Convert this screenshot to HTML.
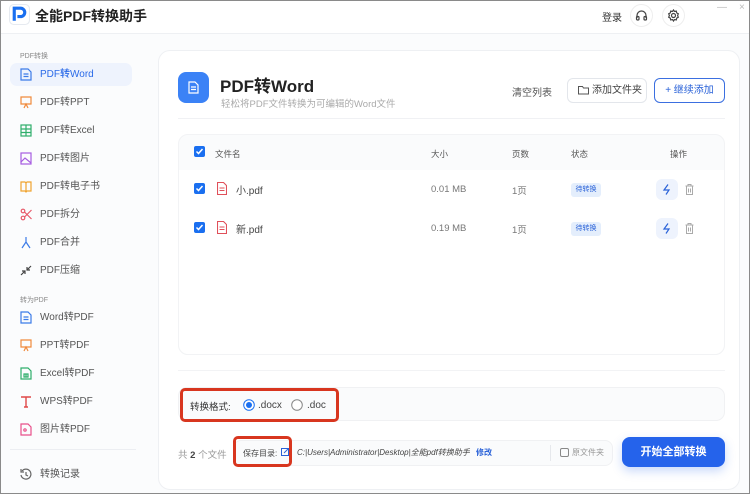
<!DOCTYPE html>
<html><head><meta charset="utf-8"><style>
*{box-sizing:border-box;margin:0;padding:0}
body{width:750px;height:494px;overflow:hidden;font-family:"Liberation Sans","Noto Sans CJK SC",sans-serif;background:#fbfcfd;position:relative;color:#333}
.frame{position:absolute;inset:0;border:1px solid #8a8a8a;pointer-events:none;z-index:9}
.hdr{position:absolute;left:0;top:0;width:750px;height:34px;background:#fff;border-bottom:1px solid #eef0f3}
.abs{position:absolute}
.side .it{position:absolute;left:10px;width:122px;height:23px;border-radius:7px;font-size:10px;color:#555;line-height:23px;padding-left:30px}
.side .it svg{position:absolute;left:10px;top:5px}
.panel{position:absolute;left:158px;top:50px;width:582px;height:440px;background:#fff;border:1px solid #eef0f3;border-radius:12px}
</style></head><body>
<div class="hdr">
 <svg class="abs" style="left:9px;top:4px" width="21" height="21" viewBox="0 0 20 20"><rect x="0.5" y="0.5" width="19" height="19" rx="4" fill="#fff" stroke="#e6eaf0"/><path d="M5 16V4h6a4 4 0 0 1 0 8H8" fill="none" stroke="#1a6ff0" stroke-width="3"/></svg>
 <div class="abs" style="left:35px;top:6px;font-size:14px;font-weight:bold;color:#222">全能PDF转换助手</div>
 <div class="abs" style="left:602px;top:9px;font-size:10px;color:#333">登录</div>
 <div class="abs" style="left:630px;top:4px;width:23px;height:23px;border:1px solid #eee;border-radius:50%"></div>
 <svg class="abs" style="left:635px;top:9px" width="13" height="13" viewBox="0 0 13 13" fill="none" stroke="#444" stroke-width="1.2"><path d="M2 9V6.5a4.5 4.5 0 0 1 9 0V9"/><rect x="1.5" y="7.5" width="2.5" height="3.5" rx="1"/><rect x="9" y="7.5" width="2.5" height="3.5" rx="1"/></svg>
 <div class="abs" style="left:662px;top:4px;width:23px;height:23px;border:1px solid #eee;border-radius:50%"></div>
 <svg class="abs" style="left:667px;top:9px" width="13" height="13" viewBox="0 0 13 13" fill="none" stroke="#444" stroke-width="1.2"><circle cx="6.5" cy="6.5" r="2"/><path d="M6.5 1l1 1.5 1.8-.4.4 1.8 1.6.9-.7 1.7.7 1.7-1.6.9-.4 1.8-1.8-.4-1 1.5-1-1.5-1.8.4-.4-1.8-1.6-.9.7-1.7-.7-1.7 1.6-.9.4-1.8 1.8.4z"/></svg>
 <div class="abs" style="left:717px;top:2px;font-size:10px;color:#bbb">—</div>
 <div class="abs" style="left:739px;top:2px;font-size:10px;color:#bbb">×</div>
</div>
<div class="side">
 <div class="abs" style="left:20px;top:51px;font-size:7px;color:#888">PDF转换</div>
 <div class="it" style="top:63px;background:#eef3fd;color:#2a6ae8;font-weight:500"><svg width="12" height="13" viewBox="0 0 12 13" fill="none" stroke="#3b7be8" stroke-width="1.2"><path d="M1 1h7l3 3v8H1z"/><path d="M3.5 6h5M3.5 8.5h5"/></svg>PDF转Word</div>
 <div class="it" style="top:91px"><svg width="12" height="13" viewBox="0 0 12 13" fill="none" stroke="#f08a3c" stroke-width="1.2"><path d="M1 1h10v7H1zM4 12l2-4 2 4"/></svg>PDF转PPT</div>
 <div class="it" style="top:119px"><svg width="12" height="13" viewBox="0 0 12 13" fill="none" stroke="#2fae6b" stroke-width="1.2"><rect x="1" y="1" width="10" height="11"/><path d="M1 5h10M1 8.5h10M6 1v11"/></svg>PDF转Excel</div>
 <div class="it" style="top:147px"><svg width="12" height="13" viewBox="0 0 12 13" fill="none" stroke="#a65ce0" stroke-width="1.2"><rect x="1" y="1" width="10" height="11"/><path d="M1 10l4-4 6 5"/></svg>PDF转图片</div>
 <div class="it" style="top:175px"><svg width="12" height="13" viewBox="0 0 12 13" fill="none" stroke="#f0a430" stroke-width="1.2"><path d="M1 2h4l1 1 1-1h4v9H7l-1 1-1-1H1zM6 3v9"/></svg>PDF转电子书</div>
 <div class="it" style="top:203px"><svg width="12" height="13" viewBox="0 0 12 13" fill="none" stroke="#e85a6a" stroke-width="1.2"><circle cx="3" cy="10" r="1.8"/><circle cx="3" cy="3" r="1.8"/><path d="M4.5 4l7 7M4.5 9l7-7"/></svg>PDF拆分</div>
 <div class="it" style="top:231px"><svg width="12" height="13" viewBox="0 0 12 13" fill="none" stroke="#3b7be8" stroke-width="1.2"><path d="M6 1v5M6 6l-4 6M6 6l4 6"/></svg>PDF合并</div>
 <div class="it" style="top:259px"><svg width="12" height="13" viewBox="0 0 12 13" fill="none" stroke="#444" stroke-width="1.2"><path d="M1 11l4-4M2 7h3v3M11 2L7 6M7 3v3h3"/></svg>PDF压缩</div>
 <div class="abs" style="left:20px;top:295px;font-size:7px;color:#888">转为PDF</div>
 <div class="it" style="top:306px"><svg width="12" height="13" viewBox="0 0 12 13" fill="none" stroke="#3b7be8" stroke-width="1.2"><path d="M1 1h7l3 3v8H1z"/><path d="M3.5 6h5M3.5 8.5h5"/></svg>Word转PDF</div>
 <div class="it" style="top:334px"><svg width="12" height="13" viewBox="0 0 12 13" fill="none" stroke="#f08a3c" stroke-width="1.2"><path d="M1 1h10v7H1zM4 12l2-4 2 4"/></svg>PPT转PDF</div>
 <div class="it" style="top:362px"><svg width="12" height="13" viewBox="0 0 12 13" fill="none" stroke="#2fae6b" stroke-width="1.2"><path d="M1 1h7l3 3v8H1z"/><path d="M4 7h4v3H4zM6 7v3"/></svg>Excel转PDF</div>
 <div class="it" style="top:390px"><svg width="12" height="13" viewBox="0 0 12 13" fill="none" stroke="#e04848" stroke-width="1.4"><path d="M1 2h10M6 2v10M4 12h4"/></svg>WPS转PDF</div>
 <div class="it" style="top:418px"><svg width="12" height="13" viewBox="0 0 12 13" fill="none" stroke="#e8508a" stroke-width="1.2"><path d="M1 1h7l3 3v8H1z"/><circle cx="5" cy="7" r="1.2"/></svg>图片转PDF</div>
 <div class="abs" style="left:10px;top:449px;width:126px;height:1px;background:#eceef2"></div>
 <div class="it" style="top:463px"><svg width="12" height="13" viewBox="0 0 12 13" fill="none" stroke="#666" stroke-width="1.2"><path d="M2 3a5 5 0 1 1-1 4"/><path d="M1 1v3h3M6 4v3l2 1"/></svg>转换记录</div>
</div>
<div class="panel"></div>
<div class="abs" style="left:178px;top:72px;width:31px;height:31px;border-radius:8px;background:#3b82f6"></div>
<svg class="abs" style="left:188px;top:81px" width="11" height="13" viewBox="0 0 11 13" fill="none" stroke="#fff" stroke-width="1.2"><path d="M1 1h6l3 3v8H1z"/><path d="M3 6h5M3 8.5h5"/></svg>
<div class="abs" style="left:220px;top:72px;font-size:17px;font-weight:bold;color:#222">PDF转Word</div>
<div class="abs" style="left:221px;top:96px;font-size:9.5px;color:#aaa">轻松将PDF文件转换为可编辑的Word文件</div>
<div class="abs" style="left:512px;top:84px;font-size:10px;color:#555">清空列表</div>
<div class="abs" style="left:567px;top:78px;width:80px;height:25px;border:1px solid #e3e6eb;border-radius:6px;font-size:10px;line-height:23px;padding-left:24px;color:#444">添加文件夹</div>
<svg class="abs" style="left:578px;top:85px" width="11" height="10" viewBox="0 0 11 10" fill="none" stroke="#555" stroke-width="1"><path d="M.5 1.5h4l1 1.5h5v6H.5z"/></svg>
<div class="abs" style="left:654px;top:78px;width:71px;height:25px;border:1px solid #3b6fe0;border-radius:6px;font-size:10px;line-height:23px;text-align:center;color:#2a62d8">+ 继续添加</div>
<div class="abs" style="left:178px;top:118px;width:547px;height:1px;background:#f0f1f4"></div>
<div class="abs" style="left:178px;top:134px;width:547px;height:221px;background:#fafbfc;border-radius:10px;border:1px solid #f2f3f5"></div>
<div class="abs" style="left:178px;top:170px;width:547px;height:185px;background:#fff;border-radius:0 0 10px 10px;border:1px solid #f2f3f5;border-top:none"></div>
<div style="font-size:8.5px;color:#555">
 <div class="abs" style="left:215px;top:148px">文件名</div>
 <div class="abs" style="left:431px;top:148px">大小</div>
 <div class="abs" style="left:512px;top:148px">页数</div>
 <div class="abs" style="left:571px;top:148px">状态</div>
 <div class="abs" style="left:670px;top:148px">操作</div>
</div>
<svg class="abs" style="left:194px;top:146px" width="11" height="11"><rect width="11" height="11" rx="2" fill="#1a6ff0"/><path d="M2.5 5.5l2 2 4-4.5" stroke="#fff" stroke-width="1.5" fill="none"/></svg>
<svg class="abs" style="left:194px;top:183px" width="11" height="11"><rect width="11" height="11" rx="2" fill="#1a6ff0"/><path d="M2.5 5.5l2 2 4-4.5" stroke="#fff" stroke-width="1.5" fill="none"/></svg>
<svg class="abs" style="left:194px;top:222px" width="11" height="11"><rect width="11" height="11" rx="2" fill="#1a6ff0"/><path d="M2.5 5.5l2 2 4-4.5" stroke="#fff" stroke-width="1.5" fill="none"/></svg>
<svg class="abs" style="left:217px;top:182px" width="10" height="13" viewBox="0 0 10 13" fill="none" stroke="#e0505a" stroke-width="1.1"><path d="M.5.5h6l3 3v9h-9z"/><path d="M2.5 6h5M2.5 8.5h5"/></svg>
<svg class="abs" style="left:217px;top:221px" width="10" height="13" viewBox="0 0 10 13" fill="none" stroke="#e0505a" stroke-width="1.1"><path d="M.5.5h6l3 3v9h-9z"/><path d="M2.5 6h5M2.5 8.5h5"/></svg>
<div style="font-size:10px;color:#444">
 <div class="abs" style="left:236px;top:182px">小.pdf</div>
 <div class="abs" style="left:236px;top:221px">新.pdf</div>
</div>
<div style="font-size:9.5px;color:#777">
 <div class="abs" style="left:431px;top:184px">0.01 MB</div>
 <div class="abs" style="left:431px;top:223px">0.19 MB</div>
 <div class="abs" style="left:512px;top:183px">1页</div>
 <div class="abs" style="left:512px;top:222px">1页</div>
</div>
<div class="abs" style="left:571px;top:183px;width:30px;height:14px;background:#e4eefc;border-radius:3px;font-size:7px;color:#2a62d8;text-align:center;line-height:14px">待转换</div>
<div class="abs" style="left:571px;top:222px;width:30px;height:14px;background:#e4eefc;border-radius:3px;font-size:7px;color:#2a62d8;text-align:center;line-height:14px">待转换</div>
<div class="abs" style="left:656px;top:179px;width:22px;height:21px;background:#eef3fd;border-radius:6px"></div>
<div class="abs" style="left:656px;top:218px;width:22px;height:21px;background:#eef3fd;border-radius:6px"></div>
<svg class="abs" style="left:662px;top:184px" width="10" height="11" viewBox="0 0 10 11" fill="none" stroke="#2a62d8" stroke-width="1.2"><path d="M6 .5L2 6h5L4 10.5"/></svg>
<svg class="abs" style="left:662px;top:223px" width="10" height="11" viewBox="0 0 10 11" fill="none" stroke="#2a62d8" stroke-width="1.2"><path d="M6 .5L2 6h5L4 10.5"/></svg>
<svg class="abs" style="left:685px;top:184px" width="9" height="11" viewBox="0 0 9 11" fill="none" stroke="#aaa" stroke-width="1"><path d="M.5 2h8M3 2V.5h3V2M1.5 2v8.5h6V2M3.5 4.5v4M5.5 4.5v4"/></svg>
<svg class="abs" style="left:685px;top:223px" width="9" height="11" viewBox="0 0 9 11" fill="none" stroke="#aaa" stroke-width="1"><path d="M.5 2h8M3 2V.5h3V2M1.5 2v8.5h6V2M3.5 4.5v4M5.5 4.5v4"/></svg>
<div class="abs" style="left:178px;top:370px;width:547px;height:1px;background:#f2f3f5"></div>
<div class="abs" style="left:178px;top:387px;width:547px;height:34px;background:#fafbfc;border-radius:9px;border:1px solid #f0f1f3"></div>
<div class="abs" style="left:180px;top:388px;width:159px;height:34px;border:3px solid #d8361f;border-radius:5px"></div>
<div class="abs" style="left:190px;top:399px;font-size:9.5px;color:#333">转换格式:</div>
<svg class="abs" style="left:243px;top:399px" width="12" height="12"><circle cx="6" cy="6" r="5.3" fill="#fff" stroke="#1a6ff0"/><circle cx="6" cy="6" r="3" fill="#1a6ff0"/></svg>
<div class="abs" style="left:258px;top:400px;font-size:10px;color:#444">.docx</div>
<svg class="abs" style="left:291px;top:399px" width="12" height="12"><circle cx="6" cy="6" r="5.3" fill="#fff" stroke="#888"/></svg>
<div class="abs" style="left:307px;top:400px;font-size:10px;color:#444">.doc</div>
<div class="abs" style="left:178px;top:447px;font-size:9.5px;color:#999">共 <b style="color:#444">2</b> 个文件</div>
<div class="abs" style="left:233px;top:440px;width:380px;height:26px;background:#fafbfc;border-radius:8px;border:1px solid #f0f1f3"></div>
<div class="abs" style="left:233px;top:436px;width:59px;height:31px;border:3px solid #d8361f;border-radius:5px"></div>
<div class="abs" style="left:243px;top:448px;font-size:8px;color:#444">保存目录:</div>
<svg class="abs" style="left:281px;top:448px" width="8" height="8" fill="none" stroke="#2a62d8"><rect x=".5" y=".5" width="7" height="7"/><path d="M3 5l4-4"/></svg>
<div class="abs" style="left:297px;top:447px;font-size:8px;color:#444;font-style:italic">C:|Users|Administrator|Desktop|全能pdf转换助手 <span style="color:#2a62d8;font-style:normal;font-weight:bold;margin-left:4px">修改</span></div>
<div class="abs" style="left:550px;top:445px;width:1px;height:16px;background:#e6e8ec"></div>
<div class="abs" style="left:560px;top:448px;width:9px;height:9px;border:1px solid #888;border-radius:2px"></div>
<div class="abs" style="left:572px;top:447px;font-size:8px;color:#999">原文件夹</div>
<div class="abs" style="left:622px;top:437px;width:103px;height:30px;background:#2563eb;border-radius:8px;color:#fff;font-size:11px;font-weight:bold;text-align:center;line-height:30px;box-shadow:0 4px 10px rgba(37,99,235,.25)">开始全部转换</div>
<div class="frame"></div>
</body></html>
